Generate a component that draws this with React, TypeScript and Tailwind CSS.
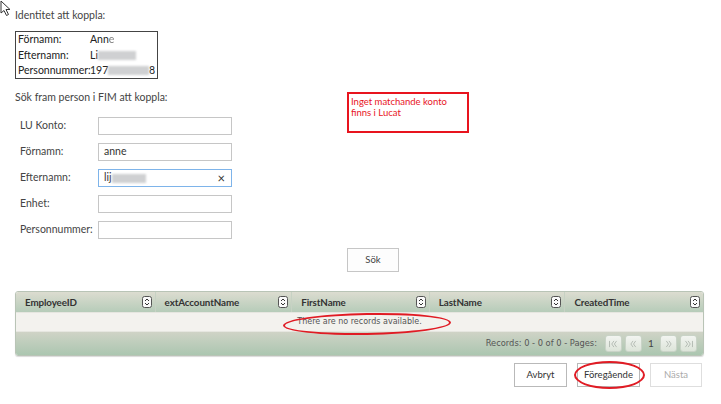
import React from "react";

const SortIcon = () => (
  <svg width="10" height="12" viewBox="0 0 10 12" className="shrink-0">
    <rect x="0.5" y="0.5" width="9" height="11" rx="2" fill="#fafafa" stroke="#555" />
    <path d="M3 5 L5 3 L7 5" fill="none" stroke="#333" strokeWidth="1" />
    <path d="M3 7 L5 9 L7 7" fill="none" stroke="#333" strokeWidth="1" />
  </svg>
);

const Blur = ({ w }: { w: number }) => (
  <span className="inline-block h-[9px] bg-[#cfd0d2] blur-[1px] align-middle" style={{ width: w }} />
);

const PagerBtn = ({ kind }: { kind: "first" | "prev" | "next" | "last" }) => {
  const paths: Record<string, string> = {
    first: "M4 5 V12 M9 5 L6.5 8.5 L9 12 M12 5 L9.5 8.5 L12 12",
    prev: "M8 5 L5.5 8.5 L8 12 M11 5 L8.5 8.5 L11 12",
    next: "M6 5 L8.5 8.5 L6 12 M9 5 L11.5 8.5 L9 12",
    last: "M5 5 L7.5 8.5 L5 12 M8 5 L10.5 8.5 L8 12 M13 5 V12",
  };
  return (
    <div className="w-[17px] h-[17px] rounded-[3px] border border-[#c9d3c7] bg-gradient-to-b from-[#f2f4f0] to-[#dde5da] flex items-center justify-center">
      <svg width="16" height="16" viewBox="0 0 17 17">
        <path d={paths[kind]} fill="none" stroke="#a8b0a8" strokeWidth="0.9" />
      </svg>
    </div>
  );
};

const FormRow = ({ label, value, focused, clear, children }: { label: string; value?: string; focused?: boolean; clear?: boolean; children?: React.ReactNode }) => (
  <div className="flex items-center h-[18px]">
    <div className="w-[83px] pl-[5px] text-[10.5px] text-[#444] whitespace-nowrap">{label}</div>
    <div
      className={
        "w-[134px] h-[18px] border bg-white flex items-center px-[5px] text-[10.5px] text-[#333] " +
        (focused ? "border-[#7eb4ea]" : "border-[#c6c6c6]")
      }
    >
      <span className="flex-1 flex items-center">{value}{children}</span>
      {clear && <span className="text-[13px] text-[#333] leading-none mr-[1px]">×</span>}
    </div>
  </div>
);

const headers = [
  { name: "EmployeeID", w: 140 },
  { name: "extAccountName", w: 137 },
  { name: "FirstName", w: 138 },
  { name: "LastName", w: 136 },
  { name: "CreatedTime", w: 138 },
];

export default function App() {
  return (
    <div
      className="relative w-[721px] h-[404px] bg-white overflow-hidden"
      style={{ fontFamily: 'Lato, "Noto Sans", sans-serif' }}
    >
      {/* cursor */}
      <svg className="absolute left-0 top-0" width="13" height="17" viewBox="0 0 13 17">
        <path d="M1 1 L1 13 L4 10.5 L6.5 15.5 L8.5 14.5 L6 9.5 L10 9.5 Z" fill="white" stroke="#333" strokeWidth="1" strokeLinejoin="round" />
      </svg>

      <div className="pl-[15px] pt-[7px]">
        <div className="text-[10.5px] leading-[16px] text-[#444]">Identitet att koppla:</div>

        <div className="mt-[8px] w-[143px] h-[48px] border border-[#444] px-[2px] text-[10.5px] leading-[15.5px] text-[#222] whitespace-nowrap">
          <div className="flex items-center"><span className="w-[72px]">Förnamn:</span><span>Ann<span className="opacity-60">e</span></span></div>
          <div className="flex items-center"><span className="w-[72px]">Efternamn:</span><span>Li</span><Blur w={38} /></div>
          <div className="flex items-center"><span className="w-[72px]">Personnummer:</span><span>197</span><Blur w={44} /><span>8</span></div>
        </div>

        <div className="flex mt-[10px]">
          <div className="w-[332px]">
            <div className="text-[10.5px] leading-[16px] text-[#444]">Sök fram person i FIM att koppla:</div>
            <div className="mt-[12px] flex flex-col gap-[8px]">
              <FormRow label="LU Konto:" />
              <FormRow label="Förnamn:" value="anne" />
              <FormRow label="Efternamn:" focused clear>
                <span>lij</span><Blur w={34} />
              </FormRow>
              <FormRow label="Enhet:" />
              <FormRow label="Personnummer:" />
            </div>
          </div>
          <div className="mt-[3px] w-[122px] h-[41px] border-2 border-[#e8141e] px-[2px] pt-[2px] text-[9.5px] leading-[11px] text-[#e8141e] whitespace-nowrap">
            Inget matchande konto<br />finns i Lucat
          </div>
        </div>

        <div className="mt-[9px] ml-[332px] w-[52px] h-[24px] border border-[#c6c6c6] bg-[#fdfdfd] flex items-center justify-center text-[9.5px] text-[#444]">
          Sök
        </div>

        {/* grid */}
        <div className="mt-[19px] w-[689px] rounded-[3px] overflow-hidden border border-[#b9c4b6] shadow-[0_1px_1px_rgba(0,0,0,0.15)]">
          <div className="flex h-[20px] bg-gradient-to-b from-[#dcdcd0] to-[#b6ccb9]">
            {headers.map((h, i) => (
              <div
                key={h.name}
                className={"flex items-center justify-between pl-[9px] pr-[3px] " + (i < headers.length - 1 ? "border-r border-[#c7d2c4]" : "")}
                style={{ width: h.w }}
              >
                <span className="text-[9.8px] font-bold tracking-[-0.1px] text-[#333]">{h.name}</span>
                <SortIcon />
              </div>
            ))}
          </div>
          <div
            className="h-[20px] bg-[#f3f2ee] border-t border-[#e6e6e0] border-b border-[#c8ccc4] flex items-center justify-center text-[8px] text-[#555]"
            style={{ fontFamily: '"DejaVu Sans", sans-serif' }}
          >
            There are no records available.
          </div>
          <div className="h-[23px] bg-gradient-to-b from-[#cfd3c6] to-[#abc6b0] flex items-center justify-end pr-[6px] gap-[3px]">
            <span className="text-[8.3px] text-[#555] mr-[5px]" style={{ fontFamily: '"DejaVu Sans", sans-serif' }}>Records: 0 - 0 of 0 - Pages:</span>
            <PagerBtn kind="first" />
            <PagerBtn kind="prev" />
            <span className="text-[10px] text-[#444] mx-[3px] w-[6px] text-center">1</span>
            <PagerBtn kind="next" />
            <PagerBtn kind="last" />
          </div>
        </div>

        <div className="mt-[7px] flex justify-end w-[687px] gap-[10px]">
          <div className="w-[53px] h-[24px] border border-[#b9b9b9] bg-white flex items-center justify-center text-[9.5px] text-[#333]">Avbryt</div>
          <div className="w-[63px] h-[24px] border border-[#b9b9b9] bg-white flex items-center justify-center text-[9.5px] text-[#333]">Föregående</div>
          <div className="w-[52px] h-[24px] border border-[#dedede] bg-white flex items-center justify-center text-[9.5px] text-[#aaa]">Nästa</div>
        </div>
      </div>

      {/* red ellipses (annotations) */}
      <div className="absolute left-[283px] top-[313px] w-[168px] h-[22px] rounded-[50%] border-2 border-[#e01b24] -rotate-[1deg]" />
      <div className="absolute left-[574px] top-[361px] w-[71px] h-[28px] rounded-[50%] border-2 border-[#e01b24]" />
    </div>
  );
}
